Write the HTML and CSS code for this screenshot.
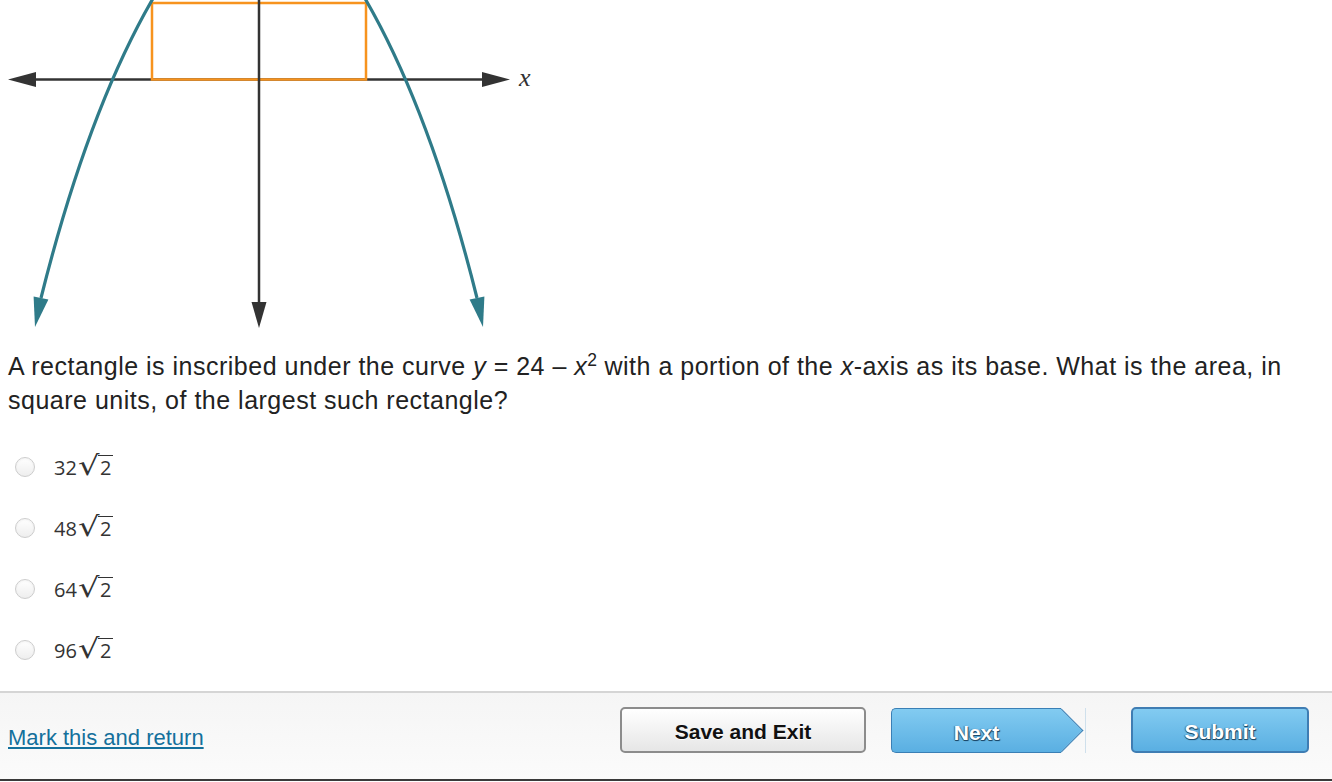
FILE: index.html
```html
<!DOCTYPE html>
<html lang="en">
<head>
  <meta charset="UTF-8">
  <meta name="viewport" content="width=device-width, initial-scale=1.0">
  <title>Question</title>
  <link rel="stylesheet" href="styles.css">
</head>
<body>
  <div class="question">
    <svg class="graph" width="540" height="335" viewBox="0 0 540 335" xmlns="http://www.w3.org/2000/svg">
      <!-- x axis -->
      <line x1="30" y1="79.5" x2="488" y2="79.5" stroke="#333" stroke-width="2.5"/>
      <polygon points="8,79.5 36,72 36,87" fill="#333"/>
      <polygon points="510,79.5 482,72 482,87" fill="#333"/>
      <!-- inscribed rectangle -->
      <rect x="152" y="3" width="214" height="76.5" fill="none" stroke="#f7931e" stroke-width="2.5"/>
      <!-- y axis -->
      <line x1="259" y1="0" x2="259" y2="306" stroke="#333" stroke-width="2.5"/>
      <polygon points="251.5,302 266.5,302 259,328" fill="#333"/>
      <!-- curve -->
      <path d="M41 298 Q89.5 104 158 -10" fill="none" stroke="#2f7b89" stroke-width="3.2"/>
      <path d="M477 298 Q428.5 104 360 -10" fill="none" stroke="#2f7b89" stroke-width="3.2"/>
      <polygon points="33.6,296.5 48.4,299.5 35,327" fill="#2f7b89"/>
      <polygon points="484.4,296.5 469.6,299.5 483,327" fill="#2f7b89"/>
      <text x="519" y="86" class="axis-label">x</text>
    </svg>

    <p class="stem">A rectangle is inscribed under the curve <i>y</i> = 24 – <i>x</i><sup>2</sup> with a portion of the <i>x</i>-axis as its base. What is the area, in square units, of the largest such rectangle?</p>

    <ul class="choices">
      <li class="choice"><span class="radio"></span><span class="math">32<span class="root">√</span><span class="radicand">2</span></span></li>
      <li class="choice"><span class="radio"></span><span class="math">48<span class="root">√</span><span class="radicand">2</span></span></li>
      <li class="choice"><span class="radio"></span><span class="math">64<span class="root">√</span><span class="radicand">2</span></span></li>
      <li class="choice"><span class="radio"></span><span class="math">96<span class="root">√</span><span class="radicand">2</span></span></li>
    </ul>
  </div>

  <div class="footer">
    <a class="mark" href="#">Mark this and return</a>
    <div class="actions">
      <button class="btn btn-save">Save and Exit</button>
      <button class="btn btn-next">Next</button>
      <span class="divider"></span>
      <button class="btn btn-submit">Submit</button>
    </div>
  </div>
</body>
</html>
```

FILE: styles.css
```css
body {
  margin: 0;
  padding: 0;
  font-family: "Liberation Sans", Arial, sans-serif;
  color: #222;
  background: #fff;
}

.question {
  height: 691px;
  padding: 0 8px;
  box-sizing: border-box;
  overflow: hidden;
}
.graph {
  display: block;
  margin-left: -8px;
}
.axis-label {
  font-family: "Liberation Serif", "Times New Roman", serif;
  font-style: italic;
  font-size: 26px;
  fill: #333;
}

.stem {
  margin: 14px 0 0;
  font-size: 25px;
  letter-spacing: 0.5px;
  line-height: 34px;
}
.stem sup {
  font-size: 0.7em;
  line-height: 0;
  letter-spacing: 0;
}

.choices {
  list-style: none;
  margin: 19px 0 0;
  padding: 0;
}
.choice {
  display: flex;
  align-items: center;
  height: 61px;
}
.radio {
  width: 20px;
  height: 20px;
  margin-left: 7px;
  margin-right: 19px;
  box-sizing: border-box;
  border: 1px solid #cdcdcd;
  border-radius: 50%;
  background: linear-gradient(#fff, #eee);
  box-shadow: inset 0 1px 2px rgba(0, 0, 0, 0.05);
}
.math {
  font-family: "Open Sans", "DejaVu Sans", sans-serif;
  font-size: 20px;
  line-height: 20px;
  color: #333;
  display: inline-flex;
  align-items: baseline;
}
.root {
  display: inline-block;
  font-family: "DejaVu Sans", sans-serif;
  font-size: 27px;
  line-height: 20px;
  margin-left: 1px;
  margin-right: 4px;
  transform: scaleX(1.25);
  transform-origin: left bottom;
}
.radicand {
  display: inline-block;
  border-top: 1.5px solid #333;
  padding: 2px 1px 0 2px;
  margin-left: -1px;
  line-height: 20px;
}

.footer {
  display: flex;
  align-items: flex-start;
  height: 72px;
  padding: 14px 23px 0 8px;
  border-top: 2px solid #d5d5d5;
  border-bottom: 2px solid #3a3a3a;
  background: linear-gradient(#f5f5f5, #fbfbfb);
}
.mark {
  margin-top: 18px;
  font-size: 22px;
  line-height: 25px;
  color: #14709c;
  text-decoration: underline;
}
.actions {
  margin-left: auto;
  display: flex;
  align-items: flex-start;
}

.btn {
  font-family: "Liberation Sans", Arial, sans-serif;
  font-weight: bold;
  font-size: 21px;
  box-sizing: border-box;
  cursor: pointer;
  padding: 4px 0 0;
}
.btn-save {
  width: 246px;
  height: 46px;
  border: 2px solid #8c8c8c;
  border-radius: 5px;
  background: linear-gradient(#fff, #e6e6e6);
  color: #111;
  text-shadow: 0 1px 0 #fff;
}
.btn-next {
  position: relative;
  width: 170px;
  height: 45px;
  margin-left: 25px;
  margin-top: 1px;
  border: 1.5px solid #3a7fb5;
  border-right: none;
  border-radius: 5px 0 0 5px;
  background: linear-gradient(#82cbf1, #5aafe2);
  color: #fff;
  text-shadow: 0 1px 0 #1c4a6c, 1px 1px 1px #1c4a6c, -1px 0 1px rgba(28, 74, 108, 0.6);
}
.btn-next::after {
  content: "";
  position: absolute;
  top: 50%;
  right: -15.5px;
  width: 31px;
  height: 31px;
  margin-top: -15.5px;
  box-sizing: border-box;
  border-top: 1.5px solid #3a7fb5;
  border-right: 1.5px solid #3a7fb5;
  background: linear-gradient(135deg, #82cbf1, #5aafe2);
  transform: rotate(45deg);
}
.divider {
  width: 1px;
  height: 45px;
  margin-top: 1px;
  margin-left: 24px;
  background: #cfe0ec;
}
.btn-submit {
  width: 178px;
  height: 46px;
  margin-left: 45px;
  border: 2px solid #3f7db3;
  border-radius: 5px;
  background: linear-gradient(#82cbf1, #5aafe2);
  color: #fff;
  text-shadow: 0 1px 0 #1c4a6c, 1px 1px 1px #1c4a6c, -1px 0 1px rgba(28, 74, 108, 0.6);
}
```
